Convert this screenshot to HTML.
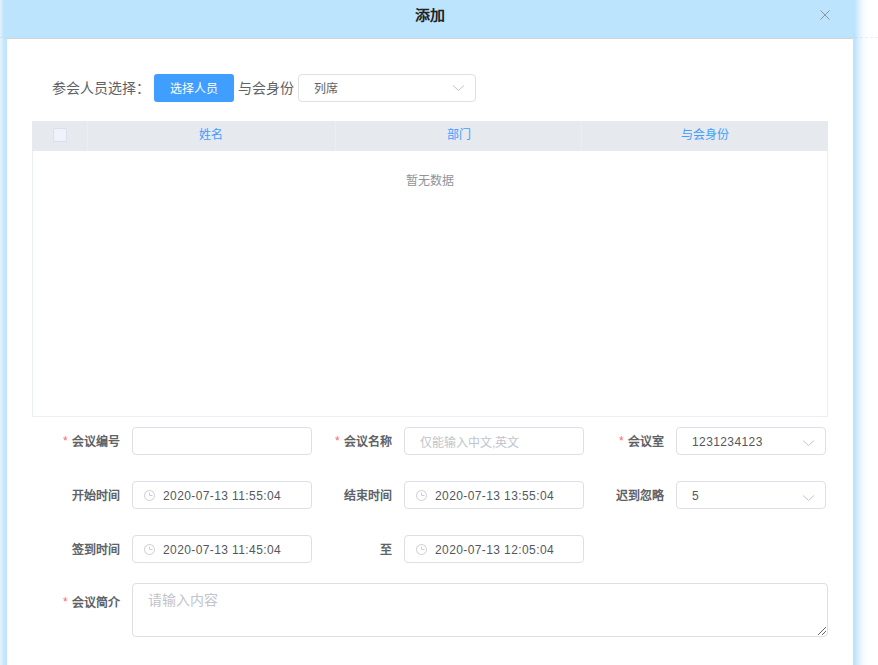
<!DOCTYPE html>
<html lang="zh-CN">
<head>
<meta charset="utf-8">
<style>
*{box-sizing:border-box;margin:0;padding:0}
html,body{width:878px;height:665px;overflow:hidden;background:#fff}
body{position:relative;font-family:"Liberation Sans",sans-serif;color:#606266}
.a{position:absolute;white-space:nowrap}
.hdr{left:4px;top:0;width:851px;height:38px;background:#bde4fd}
.lsh{left:0;top:38px;width:7px;height:627px;background:linear-gradient(to right,#e6f4fe,#d6edfd 2px,#c6e7fd 4px,#bde4fd 6px)}
.lshh{left:0;top:0;width:4px;height:38px;background:linear-gradient(to right,#e4f3fe,#d0eafd 2px,#bde4fd 4px)}
.rsh{left:853px;top:0;width:16px;height:665px;background:linear-gradient(to right,#bde4fd 0,#bde4fd 2px,#c8e7fd 3px,#d6edfe 5px,#e4f3fe 7px,#eff8fe 9px,#f7fbff 11px,#fff 15px)}
.hline{left:7px;top:38px;width:846px;height:1px;background:#d4d4d4}
.bodyw{left:7px;top:39px;width:846px;height:626px;background:#fff}
.dash{left:855px;top:37px;width:23px;height:1px;background:repeating-linear-gradient(to right,rgba(60,70,130,.085) 0,rgba(60,70,130,.085) 3px,transparent 3px,transparent 5px)}
.title{font-size:15px;font-weight:bold;color:#222;transform:scaleY(0.88);transform-origin:0 50%}
.close{left:820px;top:10px;width:10px;height:10px}
.l14{font-size:14px;color:#606266}
.btn{left:154px;top:74px;width:80px;height:28px;background:#409eff;border-radius:3px}
.box{border:1px solid #dcdfe6;border-radius:4px;background:#fff}
.t12{font-size:12px;color:#606266}
.num{letter-spacing:0.4px;color:#55575c}
.th{font-size:12px;color:#409eff}
.lb{font-size:12px;font-weight:bold;color:#606266}
.req{font-size:12px;color:#f56c6c}
.ph{color:#c0c4cc}
</style>
</head>
<body>
<div class="a rsh"></div>
<div class="a lsh"></div>
<div class="a bodyw"></div>
<div class="a hdr"></div>
<div class="a lshh"></div>
<div class="a hline"></div>
<div class="a dash"></div>
<div class="a" style="left:0;top:37px;width:2px;height:1px;background:rgba(60,70,130,.085)"></div>
<div class="a" style="left:4px;top:37px;width:1px;height:1px;background:rgba(60,70,130,.07)"></div>

<div class="a title" id="title" style="left:415px;top:4px">添加</div>
<svg class="a close" viewBox="0 0 10 10"><path d="M0.5 0.5L9.5 9.5M9.5 0.5L0.5 9.5" stroke="#909399" stroke-width="1"/></svg>

<!-- row 0 -->
<div class="a l14" style="left:52px;top:77px">参会人员选择：</div>
<div class="a btn"></div>
<div class="a t12" style="left:170px;top:79px;color:#fff">选择人员</div>
<div class="a l14" style="left:238px;top:77px">与会身份</div>
<div class="a box" style="left:298px;top:74px;width:178px;height:28px"></div>
<div class="a t12" style="left:314px;top:79px">列席</div>
<svg class="a" style="left:452px;top:84px" width="13" height="8" viewBox="0 0 13 8"><path d="M1 1.5L6.5 6.5L12 1.5" fill="none" stroke="#c0c4cc" stroke-width="1"/></svg>

<!-- table -->
<div class="a" style="left:32px;top:121px;width:796px;height:296px;border:1px solid #ebeef5;border-top:0"></div>
<div class="a" style="left:32px;top:121px;width:796px;height:30px;background:#e6e9ee"></div>
<div class="a" style="left:87px;top:121px;width:1px;height:30px;background:#ebeef5"></div>
<div class="a" style="left:335px;top:121px;width:1px;height:30px;background:#ebeef5"></div>
<div class="a" style="left:581px;top:121px;width:1px;height:30px;background:#ebeef5"></div>
<div class="a" style="left:53px;top:128px;width:14px;height:14px;border:1px solid #dcdfe6;border-radius:2px;background:#edf2fc"></div>
<div class="a th" style="left:199px;top:125px">姓名</div>
<div class="a th" style="left:447px;top:125px">部门</div>
<div class="a th" style="left:681px;top:125px">与会身份</div>
<div class="a t12" style="left:406px;top:171px;color:#909399">暂无数据</div>

<!-- form row 1 -->
<div class="a req" style="left:63px;top:434px">*</div>
<div class="a lb" style="left:72px;top:432px">会议编号</div>
<div class="a box" style="left:132px;top:427px;width:180px;height:28px"></div>
<div class="a req" style="left:335px;top:434px">*</div>
<div class="a lb" style="left:344px;top:432px">会议名称</div>
<div class="a box" style="left:404px;top:427px;width:180px;height:28px"></div>
<div class="a t12 ph" style="left:420px;top:433px">仅能输入中文,英文</div>
<div class="a req" style="left:619px;top:434px">*</div>
<div class="a lb" style="left:628px;top:432px">会议室</div>
<div class="a box" style="left:676px;top:427px;width:150px;height:28px"></div>
<div class="a t12 num" style="left:692px;top:435px">1231234123</div>
<svg class="a" style="left:802px;top:439px" width="13" height="8" viewBox="0 0 13 8"><path d="M1 1.5L6.5 6.5L12 1.5" fill="none" stroke="#c0c4cc" stroke-width="1"/></svg>

<!-- form row 2 -->
<div class="a lb" style="left:72px;top:486px">开始时间</div>
<div class="a box" style="left:132px;top:481px;width:180px;height:28px"></div>
<svg class="a" style="left:143px;top:489px" width="13" height="13" viewBox="0 0 13 13"><circle cx="6.5" cy="6.5" r="5" fill="none" stroke="#c4c8d0" stroke-width="0.9"/><path d="M6.5 3.5V6.5H9.5" fill="none" stroke="#c4c8d0" stroke-width="0.9"/></svg>
<div class="a t12 num" style="left:163px;top:489px">2020-07-13 11:55:04</div>
<div class="a lb" style="left:344px;top:486px">结束时间</div>
<div class="a box" style="left:404px;top:481px;width:180px;height:28px"></div>
<svg class="a" style="left:415px;top:489px" width="13" height="13" viewBox="0 0 13 13"><circle cx="6.5" cy="6.5" r="5" fill="none" stroke="#c4c8d0" stroke-width="0.9"/><path d="M6.5 3.5V6.5H9.5" fill="none" stroke="#c4c8d0" stroke-width="0.9"/></svg>
<div class="a t12 num" style="left:435px;top:489px">2020-07-13 13:55:04</div>
<div class="a lb" style="left:616px;top:486px">迟到忽略</div>
<div class="a box" style="left:676px;top:481px;width:150px;height:28px"></div>
<div class="a t12 num" style="left:692px;top:489px">5</div>
<svg class="a" style="left:802px;top:494px" width="13" height="8" viewBox="0 0 13 8"><path d="M1 1.5L6.5 6.5L12 1.5" fill="none" stroke="#c0c4cc" stroke-width="1"/></svg>

<!-- form row 3 -->
<div class="a lb" style="left:72px;top:540px">签到时间</div>
<div class="a box" style="left:132px;top:535px;width:180px;height:28px"></div>
<svg class="a" style="left:143px;top:543px" width="13" height="13" viewBox="0 0 13 13"><circle cx="6.5" cy="6.5" r="5" fill="none" stroke="#c4c8d0" stroke-width="0.9"/><path d="M6.5 3.5V6.5H9.5" fill="none" stroke="#c4c8d0" stroke-width="0.9"/></svg>
<div class="a t12 num" style="left:163px;top:543px">2020-07-13 11:45:04</div>
<div class="a lb" style="left:380px;top:540px">至</div>
<div class="a box" style="left:404px;top:535px;width:180px;height:28px"></div>
<svg class="a" style="left:415px;top:543px" width="13" height="13" viewBox="0 0 13 13"><circle cx="6.5" cy="6.5" r="5" fill="none" stroke="#c4c8d0" stroke-width="0.9"/><path d="M6.5 3.5V6.5H9.5" fill="none" stroke="#c4c8d0" stroke-width="0.9"/></svg>
<div class="a t12 num" style="left:435px;top:543px">2020-07-13 12:05:04</div>

<!-- textarea -->
<div class="a req" style="left:63px;top:595px">*</div>
<div class="a lb" style="left:72px;top:593px">会议简介</div>
<div class="a box" style="left:132px;top:583px;width:696px;height:54px"></div>
<div class="a l14 ph" style="left:148px;top:589px">请输入内容</div>
<svg class="a" style="left:816px;top:625px" width="11" height="11" viewBox="0 0 11 11"><path d="M2 10L10 2M6 10L10 6" stroke="#666" stroke-width="1"/></svg>
</body>
</html>
